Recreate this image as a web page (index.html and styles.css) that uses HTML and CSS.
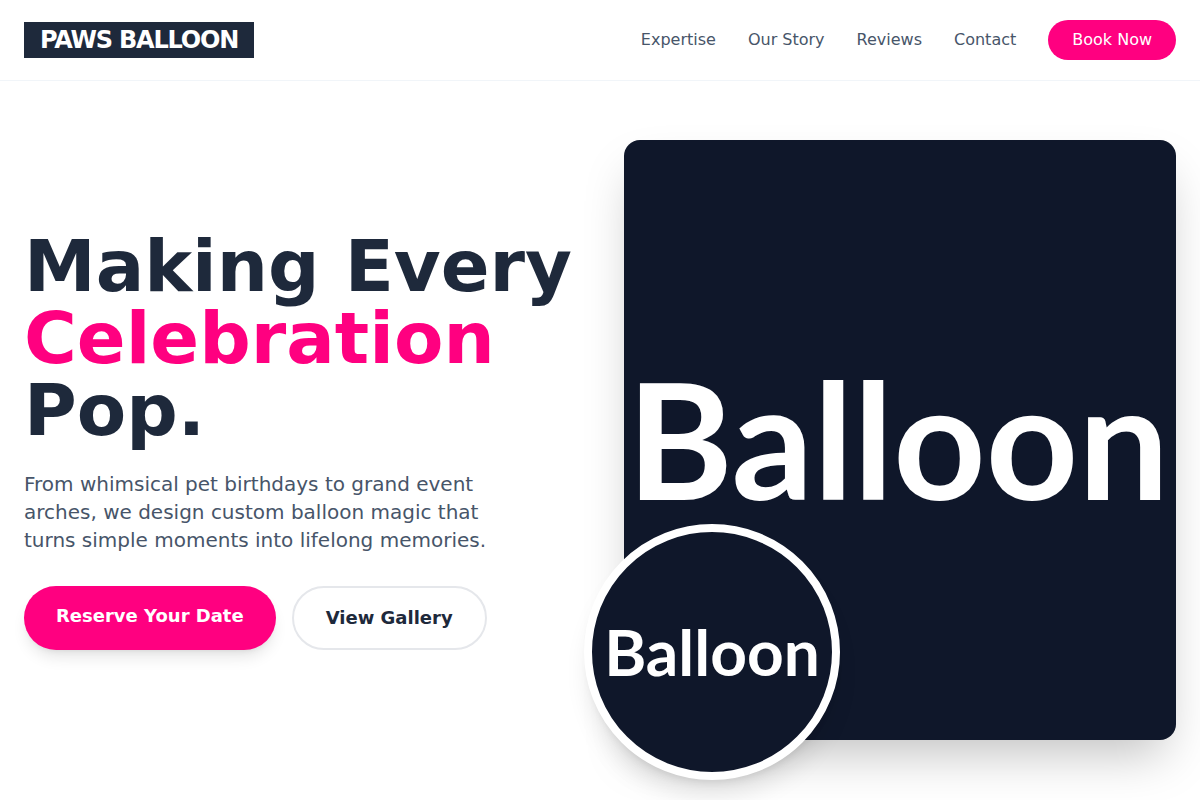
FILE: index.html
```html
<!DOCTYPE html>
<html lang="en">
<head>
<meta charset="utf-8">
<meta name="viewport" content="width=device-width, initial-scale=1">
<title>Paws Balloon</title>
<link rel="stylesheet" href="styles.css">
</head>
<body>
<header class="header">
  <nav class="nav container">
    <a class="logo" href="#">PAWS BALLOON</a>
    <div class="links">
      <a href="#expertise">Expertise</a>
      <a href="#story">Our Story</a>
      <a href="#reviews">Reviews</a>
      <a href="#contact">Contact</a>
      <a class="book" href="#book">Book Now</a>
    </div>
  </nav>
</header>
<main class="hero container">
  <section class="copy">
    <h1 class="title">Making Every <span class="accent">Celebration</span> Pop.</h1>
    <p class="lead">From whimsical pet birthdays to grand event arches, we design custom balloon magic that turns simple moments into lifelong memories.</p>
    <div class="actions">
      <a class="btn primary" href="#book">Reserve Your Date</a>
      <a class="btn secondary" href="#gallery">View Gallery</a>
    </div>
  </section>
  <div class="media">
    <div class="photo">Balloon</div>
    <div class="bubble">Balloon</div>
  </div>
</main>
</body>
</html>
```
FILE: styles.css
```css
*, *::before, *::after { box-sizing: border-box; }
body {
  margin: 0;
  background: #fff;
  color: #1e293b;
  font-family: "DejaVu Sans", sans-serif;
  font-size: 16px;
  line-height: 24px;
  overflow-x: hidden;
}
a { color: inherit; text-decoration: none; }
.container { max-width: 1280px; margin: 0 auto; padding: 0 24px; }
.header { border-bottom: 1px solid #f1f5f9; }
.nav { display: flex; align-items: center; justify-content: space-between; height: 80px; }
.logo {
  padding: 2px 16px;
  background: #1e293b;
  color: #fff;
  font-size: 24px;
  font-weight: 700;
  line-height: 32px;
  letter-spacing: -1.2px;
}
.links { display: flex; align-items: center; gap: 32px; color: #475569; }
.book { padding: 8px 24px; border-radius: 999px; background: #ff0080; color: #fff; }
.hero {
  display: grid;
  grid-template-columns: 1fr 1fr;
  gap: 48px;
  align-items: center;
  padding-top: 59px;
  padding-bottom: 60px;
}
.title { margin: 0 0 24px; font-size: 72px; font-weight: 700; line-height: 72px; }
.accent { color: #ff0080; }
.lead { margin: 0 0 32px; max-width: 512px; color: #475569; font-size: 20px; line-height: 28px; }
.actions { display: flex; gap: 16px; }
.btn { padding: 16px 32px; border-radius: 999px; font-size: 18px; font-weight: 700; line-height: 28px; }
.primary {
  background: #ff0080;
  color: #fff;
  box-shadow: 0 10px 15px -3px rgb(0 0 0 / 10%), 0 4px 6px -4px rgb(0 0 0 / 10%);
}
.secondary { border: 2px solid #e5e7eb; }
.media { position: relative; }
.photo, .bubble {
  display: flex;
  align-items: center;
  justify-content: center;
  background: #0f172a;
  color: #fff;
  font-family: Lato, sans-serif;
  font-weight: 700;
}
.photo {
  height: 600px;
  padding: 0 4px 4px 0;
  border-radius: 16px;
  font-size: 161px;
  box-shadow: 0 25px 50px -12px rgb(0 0 0 / 25%);
}
.bubble {
  position: absolute;
  left: -40px;
  bottom: -40px;
  width: 256px;
  height: 256px;
  border: 8px solid #fff;
  border-radius: 50%;
  font-size: 64px;
  box-shadow: 0 20px 25px -5px rgb(0 0 0 / 10%), 0 8px 10px -6px rgb(0 0 0 / 10%);
}
```
